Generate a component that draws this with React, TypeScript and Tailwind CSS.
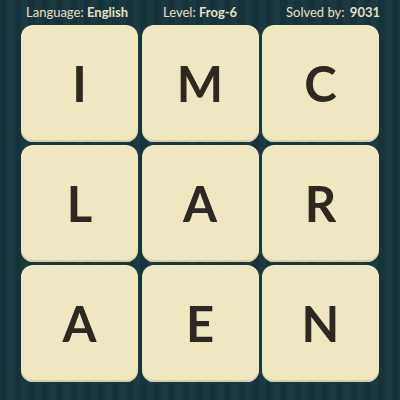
const letters = ['I', 'M', 'C', 'L', 'A', 'R', 'A', 'E', 'N'];

export default function App() {
  return (
    <div className="h-[400px] w-[400px] overflow-hidden bg-[repeating-linear-gradient(90deg,#16323a_0px,#16323a_7px,#1a3941_7px,#1a3941_14px)] font-['Lato',sans-serif]">
      <div className="flex h-[25px] items-center pl-[26px] text-[13px] leading-none text-[#e6e0c4]">
        <p className="w-[137px]">
          Language: <span className="font-bold">English</span>
        </p>
        <p className="w-[123px]">
          Level: <span className="font-bold">Frog-6</span>
        </p>
        <p>
          Solved by: <span className="ml-0.5 font-bold">9031</span>
        </p>
      </div>
      <div className="grid grid-cols-[117px_117px_117px] gap-x-[3.5px] gap-y-[3px] pl-[21px]">
        {letters.map((letter, i) => (
          <div
            key={i}
            className="flex h-[117px] w-[117px] items-center justify-center rounded-[12px] bg-[#efe7c2] shadow-[inset_0_-2px_0_#d9d0a6] text-[49px] font-bold leading-none text-[#2d2822]"
          >
            {letter}
          </div>
        ))}
      </div>
    </div>
  );
}
